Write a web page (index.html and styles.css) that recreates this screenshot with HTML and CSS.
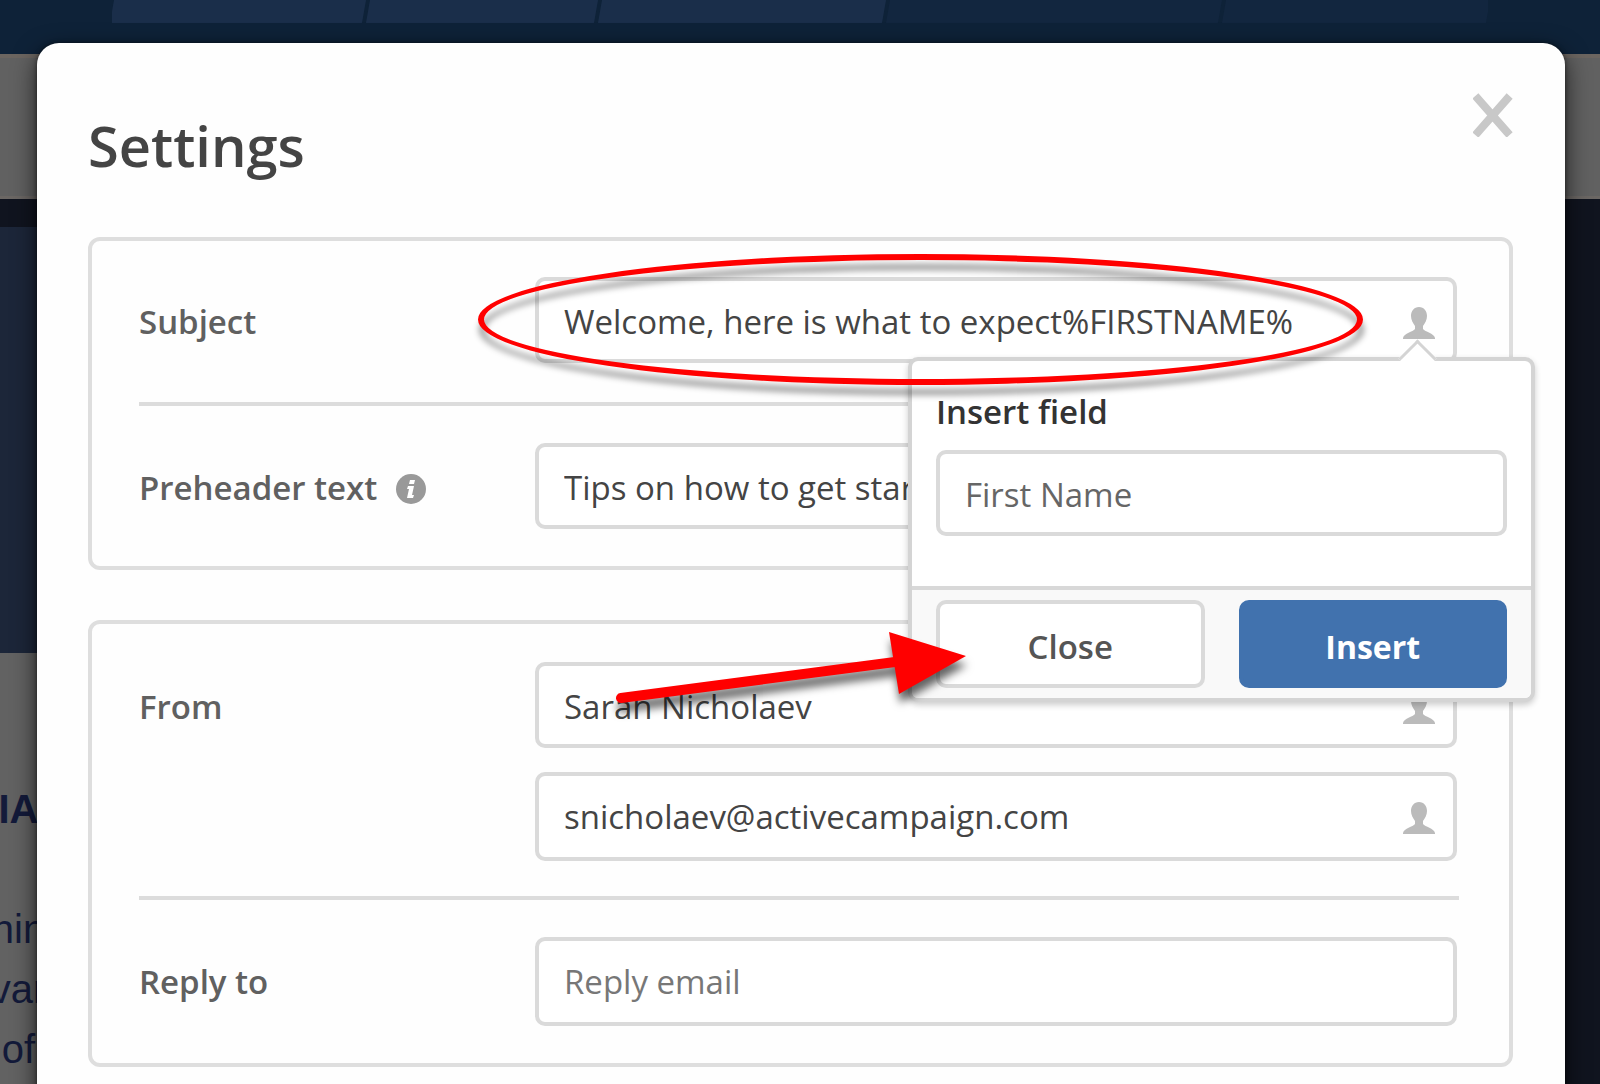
FILE: index.html
```html
<!DOCTYPE html>
<html lang="en">
<head>
    <meta charset="UTF-8">
    <meta name="viewport" content="width=device-width, initial-scale=1.0">
    <title>Settings</title>
    <link rel="stylesheet" href="styles.css">
</head>
<body>
    <svg class="symbols" aria-hidden="true">
        <symbol id="person" viewBox="0 0 32 32">
            <path d="M16 0c5 0 8 4 8 9 0 4-2 7-4 10v3c2 3 11 4 12 9v1H0v-1c1-5 10-6 12-9v-3c-2-3-4-6-4-10 0-5 3-9 8-9z"/>
        </symbol>
    </svg>

    <!-- Page behind the dialog -->
    <div class="page">
        <header class="top-bar">
            <div class="steps">
                <span class="step step-1"></span>
                <span class="step step-2"></span>
                <span class="step step-3"></span>
                <span class="step step-4 step-next"></span>
                <span class="step step-5 step-next"></span>
            </div>
        </header>
        <div class="tool-bar"></div>
        <div class="canvas">
            <div class="email">
                <div class="email-head"></div>
                <div class="email-body">
                    <strong class="email-title">IA</strong>
                    <span>nin</span>
                    <span>var</span>
                    <span>of</span>
                </div>
            </div>
        </div>
    </div>

    <div class="overlay">
        <form class="modal" role="dialog" aria-labelledby="modal-title">
            <div class="modal-header">
                <h1 id="modal-title">Settings</h1>
                <button type="button" class="modal-close" aria-label="Close settings">
                    <svg viewBox="0 0 40 44"><path d="M5 6L34 39M34 6L5 39"/></svg>
                </button>
            </div>

            <section class="panel">
                <div class="row">
                    <label for="subject">Subject</label>
                    <div class="field">
                        <input type="text" id="subject" value="Welcome, here is what to expect%FIRSTNAME%">
                        <svg class="person"><use href="#person"/></svg>

                        <div class="popover">
                            <div class="popover-body">
                                <label for="insert-field">Insert field</label>
                                <select id="insert-field">
                                    <option>First Name</option>
                                </select>
                            </div>
                            <div class="popover-footer">
                                <button type="button" class="button">Close</button>
                                <button type="button" class="button button-primary">Insert</button>
                            </div>
                        </div>
                        <div class="mark-oval"></div>
                    </div>
                </div>
                <div class="row">
                    <label for="preheader">Preheader text
                        <svg class="info" viewBox="0 0 30 30">
                            <circle cx="15" cy="15" r="15"/>
                            <path d="M14 6h5l-1 4h-5zM12 12h6l-2 9h2l-1 3h-6l2-9h-2z"/>
                        </svg>
                    </label>
                    <div class="field">
                        <input type="text" id="preheader" value="Tips on how to get started">
                    </div>
                </div>
            </section>

            <section class="panel">
                <div class="row row-from">
                    <label for="from-name">From</label>
                    <div class="field-group">
                        <div class="field">
                            <input type="text" id="from-name" value="Sarah Nicholaev">
                            <svg class="person"><use href="#person"/></svg>
                            <svg class="mark-arrow" viewBox="0 0 370 90">
                                <path class="mark-line" d="M6 72L280 36"/>
                                <path class="mark-head" d="M274 6L351 30L284 68z"/>
                            </svg>
                        </div>
                        <div class="field">
                            <input type="email" id="from-email" class="tall" aria-label="From email" value="snicholaev@activecampaign.com">
                            <svg class="person"><use href="#person"/></svg>
                        </div>
                    </div>
                </div>
                <div class="row">
                    <label for="reply-to">Reply to</label>
                    <div class="field">
                        <input type="email" id="reply-to" class="tall" placeholder="Reply email">
                    </div>
                </div>
            </section>
        </form>
    </div>
</body>
</html>
```

FILE: styles.css
```css
* {
    box-sizing: border-box;
}

body {
    margin: 0;
    height: 100vh;
    overflow: hidden;
    position: relative;
    background-color: #10141f;
    color: #444;
    font-family: "Open Sans", sans-serif;
    font-size: 33px;
    line-height: 46px;
}

input,
select,
button {
    font: inherit;
    color: inherit;
}

.symbols {
    position: absolute;
    width: 0;
    height: 0;
}

/* Page behind the dialog */
.page {
    height: 100%;
    display: flex;
    flex-direction: column;
}

.top-bar {
    height: 54px;
    padding: 0 112px;
    background-color: #0e2238;
}

.steps {
    display: flex;
    gap: 4px;
    height: 23px;
    overflow: hidden;
}

.step {
    background-color: #1a2e4a;
    transform: skewX(-10deg);
}

.step-1 {
    flex: 252;
}

.step-2 {
    flex: 228;
}

.step-3 {
    flex: 284;
}

.step-4 {
    flex: 332;
}

.step-5 {
    flex: 264;
}

.step-next {
    background-color: #12263f;
}

.tool-bar {
    height: 145px;
    background-color: #616161;
    border-top: 4px solid #6b6560;
    border-bottom: 3px solid #6b6764;
}

.canvas {
    flex: 1;
    display: flex;
    padding-top: 28px;
}

.email {
    width: 37px;
    display: flex;
    flex-direction: column;
}

.email-head {
    height: 426px;
    background-color: #1c2639;
}

.email-body {
    flex: 1;
    display: flex;
    flex-direction: column;
    align-items: center;
    padding-top: 126px;
    background-color: #626262;
    color: #131a3a;
    font-family: "Liberation Sans", Arial, sans-serif;
    font-size: 40px;
    line-height: 60px;
}

.email-title {
    margin-bottom: 60px;
}

/* Dialog */
.overlay {
    position: absolute;
    inset: 0;
    padding: 43px 35px 0 37px;
}

.modal {
    min-height: 100%;
    padding: 44px 52px 19px 51px;
    background-color: #fefefe;
    border-radius: 22px 22px 0 0;
    box-shadow: 0 8px 24px rgba(0, 0, 0, 0.7), 0 0 4px rgba(0, 0, 0, 0.5);
}

.modal-header {
    display: flex;
    justify-content: space-between;
    align-items: flex-start;
    height: 150px;
}

.modal-header h1 {
    margin: 20px 0 0;
    font-size: 56px;
    font-weight: 600;
    line-height: 76px;
}

.modal-close {
    padding: 6px 0;
    border: none;
    background: none;
    cursor: pointer;
}

.modal-close svg {
    display: block;
    width: 40px;
    height: 44px;
    stroke: #c8c8c8;
    stroke-width: 8;
    stroke-linecap: square;
}

.panel {
    border: 4px solid #dedede;
    border-radius: 12px;
    padding: 0 50px 0 47px;
    margin-bottom: 50px;
}

.row {
    display: flex;
    align-items: flex-start;
    padding: 37px 0;
}

.row:first-child {
    padding: 36px 0 39px;
}

.row-from:first-child {
    padding: 38px 0 35px;
}

.row + .row {
    border-top: 4px solid #dcdcdc;
}

.row > label {
    width: 396px;
    padding-top: 22px;
    font-weight: 600;
    color: #606060;
}

.info {
    width: 30px;
    height: 30px;
    margin-left: 10px;
    vertical-align: -4px;
    fill: #999;
}

.info path {
    fill: #fff;
}

.field {
    flex: 1;
    position: relative;
    padding-right: 2px;
}

.field-group {
    flex: 1;
    display: flex;
    flex-direction: column;
    gap: 24px;
}

input,
select {
    display: block;
    width: 100%;
    height: 86px;
    padding: 3px 25px 0;
    border: 4px solid #dadada;
    border-radius: 10px;
    background-color: #fff;
}

input.tall {
    height: 89px;
    padding-top: 0;
}

input::placeholder {
    color: #777;
}

.person {
    position: absolute;
    right: 24px;
    top: 30px;
    width: 32px;
    height: 32px;
    fill: #bbb;
}

/* Insert field popover */
.popover {
    position: absolute;
    z-index: 1;
    top: 80px;
    right: -76px;
    width: 627px;
    border: 4px solid #d4d4d4;
    border-radius: 10px;
    background-color: #fff;
    box-shadow: 0 3px 6px rgba(0, 0, 0, 0.2);
}

.popover::before {
    content: "";
    position: absolute;
    top: -16px;
    right: 100px;
    width: 24px;
    height: 24px;
    border: solid #d4d4d4;
    border-width: 3px 0 0 3px;
    background-color: #fff;
    transform: rotate(45deg);
}

.popover-body {
    padding: 28px 24px 50px;
}

.popover-body label {
    display: block;
    margin-bottom: 15px;
    font-weight: 600;
    color: #333;
}

.popover select {
    appearance: none;
    color: #666;
}

.popover-footer {
    display: flex;
    gap: 34px;
    padding: 10px 24px;
    border-top: 4px solid #d8d8d8;
    border-radius: 0 0 6px 6px;
    background-color: #f9f9f9;
}

.button {
    flex: 1;
    height: 88px;
    padding-top: 6px;
    border: 4px solid #dadada;
    border-radius: 10px;
    background-color: #fff;
    color: #555;
    font-weight: 600;
    cursor: pointer;
}

.button-primary {
    border-color: #4172ae;
    background-color: #4172ae;
    color: #fff;
    font-size: 32px;
    font-weight: 700;
}

/* Red marks over the form */
.mark-oval {
    position: absolute;
    z-index: 2;
    top: -23px;
    left: -57px;
    right: 96px;
    height: 131px;
    border: 6px solid #f00;
    border-radius: 50%;
    filter: drop-shadow(1px 10px 3px rgba(0, 0, 0, 0.4));
    pointer-events: none;
}

.mark-arrow {
    position: absolute;
    z-index: 2;
    top: -36px;
    left: 80px;
    width: 370px;
    height: 90px;
    overflow: visible;
    filter: drop-shadow(1px 9px 4px rgba(0, 0, 0, 0.6));
    pointer-events: none;
}

.mark-line {
    stroke: #f00;
    stroke-width: 10;
    stroke-linecap: round;
}

.mark-head {
    fill: #f00;
}
```
